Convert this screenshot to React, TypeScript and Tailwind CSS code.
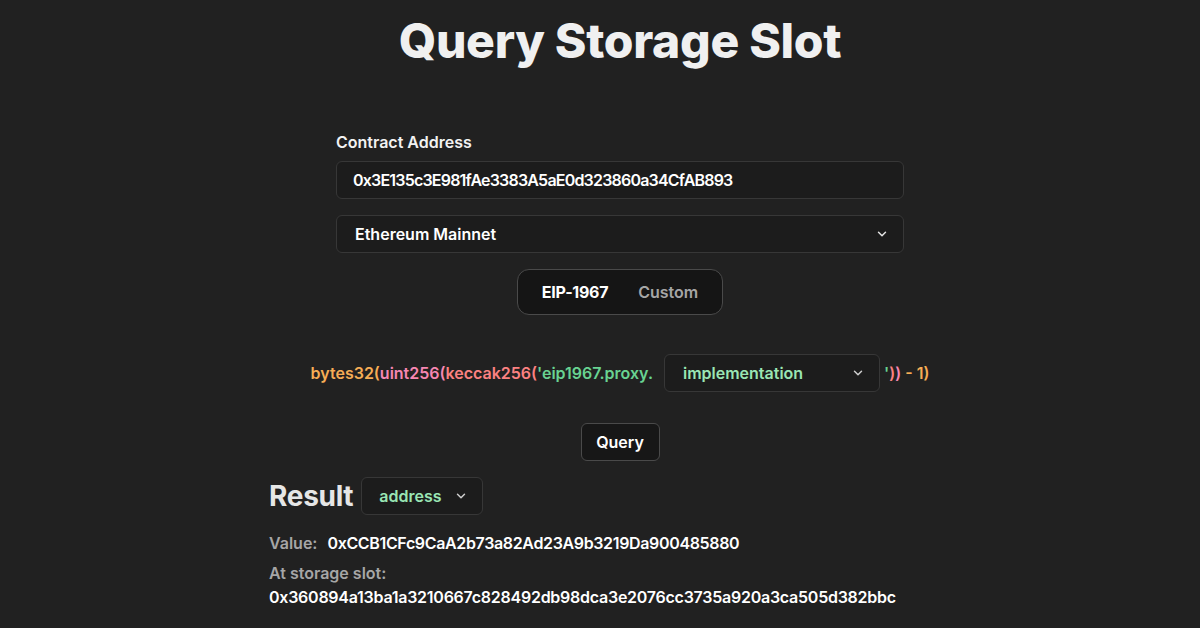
import React, { useState } from 'react';

function Chevron({ className = '' }: { className?: string }) {
  return (
    <svg
      viewBox="0 0 24 24"
      width="14"
      height="14"
      fill="none"
      stroke="currentColor"
      strokeWidth="2.5"
      strokeLinecap="round"
      strokeLinejoin="round"
      className={className}
    >
      <path d="M6 9l6 6 6-6" />
    </svg>
  );
}

export default function App() {
  const [tab, setTab] = useState<'eip' | 'custom'>('eip');

  return (
    <div className="min-h-screen bg-[#212121] pl-10 text-white font-['Inter','Open_Sans',sans-serif]">
      <div className="flex flex-col items-center">
        {/* Title */}
        <h1 className="pt-[17px] text-[48px] leading-none font-extrabold text-[#f0f0f0] tracking-[-0.3px]">
          Query Storage Slot
        </h1>

        {/* Address + network */}
        <div className="mt-[65px] w-[568px] flex flex-col">
          <label className="text-[16px] leading-6 font-semibold text-[#f2f2f2]">Contract Address</label>
          <div className="mt-[7px] h-[38px] rounded-md border border-[#373737] bg-[#1c1c1c] px-4 flex items-center text-[16px] font-semibold text-white tracking-[-0.8px]">
            0x3E135c3E981fAe3383A5aE0d323860a34CfAB893
          </div>
          <div className="mt-4 h-[38px] rounded-md border border-[#373737] bg-[#1c1c1c] pl-[18px] pr-[14px] flex items-center justify-between text-[16px] font-semibold text-white">
            <span>Ethereum Mainnet</span>
            <Chevron className="text-[#e5e5e5]" />
          </div>
        </div>

        {/* Tabs */}
        <div className="mt-4 h-[46px] w-[206px] rounded-xl border border-[#4a4a4a] bg-[#151515] flex items-center justify-center gap-[30px] text-[16px]">
          <button
            onClick={() => setTab('eip')}
            className={tab === 'eip' ? 'font-bold text-white tracking-[-0.3px]' : 'font-semibold text-[#a6a6a6]'}
          >
            EIP-1967
          </button>
          <button
            onClick={() => setTab('custom')}
            className={tab === 'custom' ? 'font-bold text-white' : 'font-semibold text-[#a6a6a6]'}
          >
            Custom
          </button>
        </div>

        {/* Formula */}
        <div className="mt-[39px] flex items-center text-[16px] font-semibold">
          <span className="text-[#f6ad55]">bytes32(</span>
          <span className="text-[#f687b3]">uint256(</span>
          <span className="text-[#fc8181]">keccak256(</span>
          <span className="text-[#68d391]">'eip1967.proxy.</span>
          <div className="ml-[11px] h-[38px] w-[216px] rounded-md border border-[#373737] bg-[#1c1c1c] pl-[18px] pr-[14px] flex items-center justify-between text-[#9ae6b4]">
            <span>implementation</span>
            <Chevron className="text-[#cfcfcf]" />
          </div>
          <span className="ml-[4px] text-[#68d391]">'</span>
          <span className="text-[#fc8181]">)</span>
          <span className="text-[#f687b3]">)</span>
          <span className="text-[#f6ad55] whitespace-pre"> - 1)</span>
        </div>

        {/* Query */}
        <button className="mt-[31px] h-[38px] w-[79px] rounded-md border border-[#4a4a4a] bg-[#171717] text-[16px] font-semibold text-white">
          Query
        </button>

        {/* Result */}
        <div className="mt-4 w-[702px] flex flex-col">
          <div className="flex items-center gap-2">
            <h2 className="text-[28px] leading-none font-bold text-[#e6e6e6] tracking-[-0.3px]">Result</h2>
            <div className="h-[38px] w-[122px] rounded-md border border-[#373737] bg-[#1c1c1c] pl-[17px] pr-[14px] flex items-center justify-between text-[16px] font-semibold text-[#9ae6b4]">
              <span>address</span>
              <Chevron className="text-[#cfcfcf]" />
            </div>
          </div>
          <div className="mt-[16px] text-[16px] leading-6 font-semibold">
            <span className="text-[#a6a6a6]">Value:</span>
            <span className="ml-[10px] text-white tracking-[-0.35px]">0xCCB1CFc9CaA2b73a82Ad23A9b3219Da900485880</span>
          </div>
          <div className="mt-[6px] text-[16px] leading-6 font-semibold text-[#a6a6a6]">At storage slot:</div>
          <div className="text-[16px] leading-6 font-semibold text-white tracking-[-0.25px]">
            0x360894a13ba1a3210667c828492db98dca3e2076cc3735a920a3ca505d382bbc
          </div>
        </div>
      </div>
    </div>
  );
}
